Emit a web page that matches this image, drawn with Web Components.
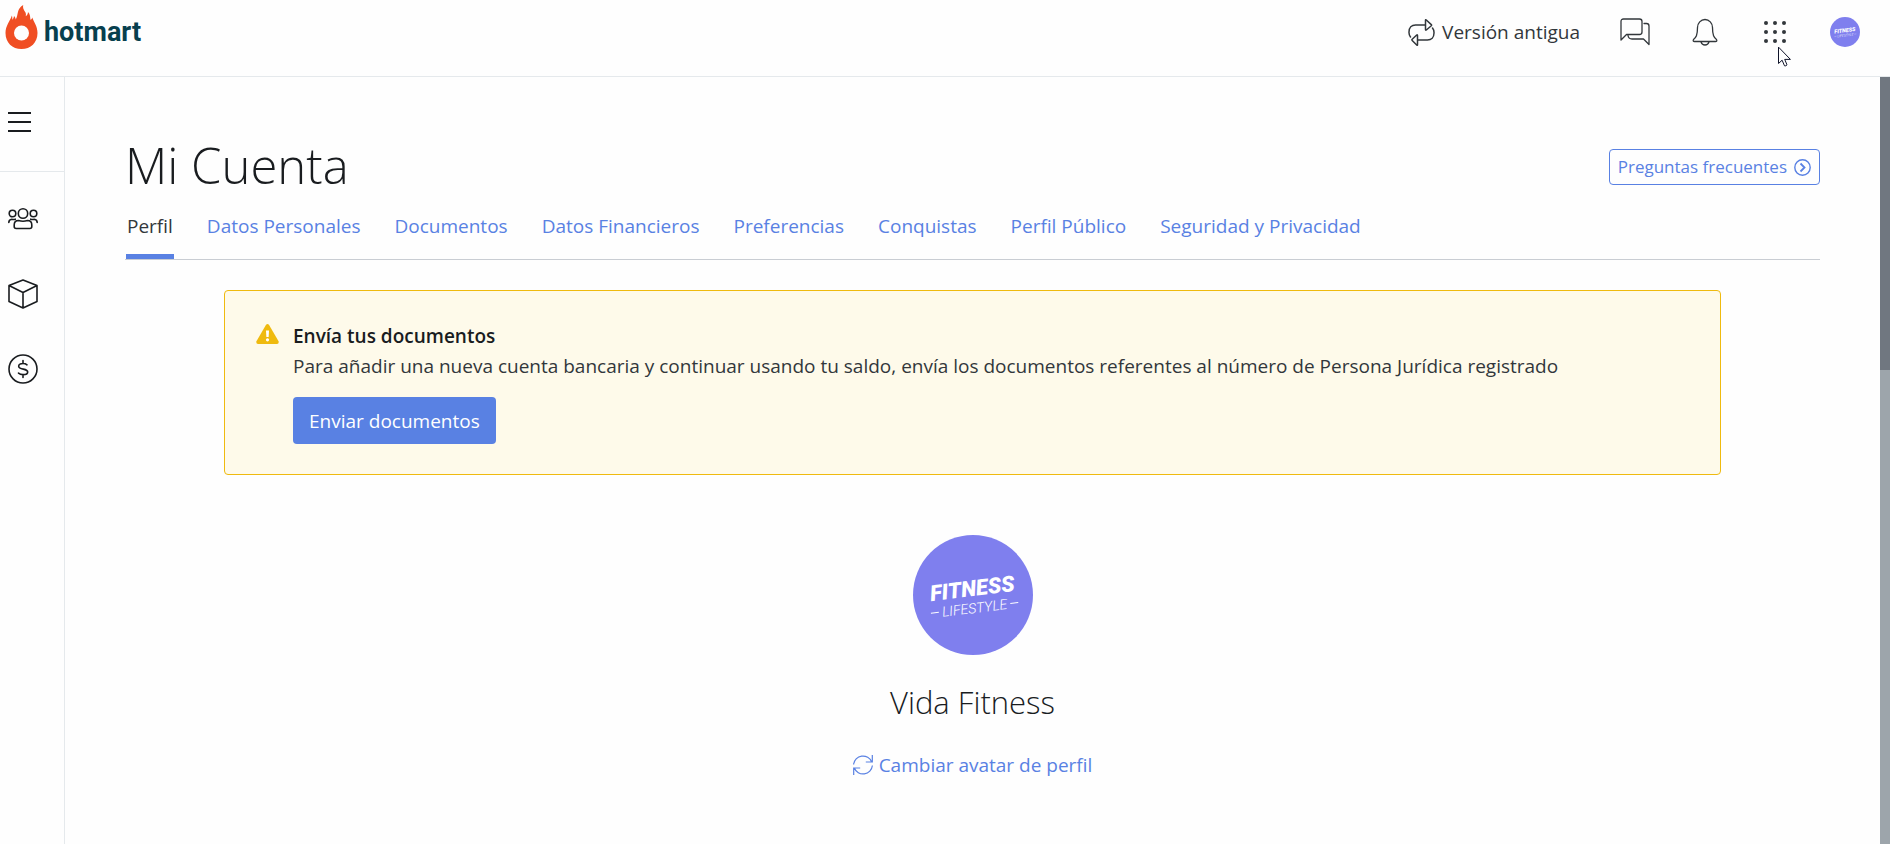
<!DOCTYPE html>
<html lang="es">
<head>
<meta charset="utf-8">
<meta name="viewport" content="width=device-width, initial-scale=1">
<title>Mi Cuenta</title>
<style>
  :root {
    --ink: #191c1f;
    --text: #32373b;
    --blue: #5981e3;
    --line: #e5e9ec;
    --rule: #c9cdd3;
    --amber: #efba0f;
    --cream: #fefaea;
    --violet: #7f7fee;
  }
  html, body { margin: 0; }
  body { background: #fefefe; color: var(--text); font: 19px/30px "Open Sans", "Noto Sans", sans-serif; }
</style>
</head>
<body>
<account-app></account-app>

<script>
const define = (name, html) => {
  const template = document.createElement('template');
  template.innerHTML = '<style>*{box-sizing:border-box}svg{display:block;flex:none}a{color:inherit;text-decoration:none}button{font:inherit;color:inherit;background:none;border:0;padding:0;cursor:pointer}</style>' + html;
  customElements.define(name, class extends HTMLElement {
    constructor() {
      super();
      this.attachShadow({ mode: 'open' }).append(template.content.cloneNode(true));
    }
  });
};

define('brand-logo', `
  <style>
    :host { display: block; }
    a { display: flex; align-items: flex-start; gap: 6px; color: #073f4e; font: 700 27px/44px Roboto, sans-serif; }
    span { padding-top: 5px; }
  </style>
  <a href="#">
    <svg width="33" height="44" viewBox="0 0 33 44" aria-hidden="true">
      <path fill="#f04e23" d="M18.200 0c-.8 4 1.600 5.800 2.300 7.600.6 1.500.5 2.500.2 3.700 1.500-.9 2.300-2.500 2.300-4.300 2.300 2.300 2.200 5 2.400 7.700 1-.3 1.600-1.200 1.900-2.300 1.600 4.800 5.200 8.400 5.200 15.500C32.500 37.500 25.700 44 16.500 44S.5 37.500.5 27.900c0-6.900 4.300-11.400 6.400-17.400.5 1.700.5 3 .4 4.200 1-.8 1.600-2.200 1.700-3.700 1 .8 1.600 2.100 1.700 3.500C13.500 10.500 11.500 3.500 18.200 0z"/>
      <circle cx="16.500" cy="28" r="7.500" fill="#fefefe"/>
    </svg>
    <span>hotmart</span>
  </a>`);

define('profile-avatar', `
  <style>
    :host { display: block; }
    svg { width: 100%; height: 100%; }
    text { fill: #fff; font-family: Roboto, sans-serif; text-anchor: middle; }
    .big { font-size: 22px; font-weight: 900; font-style: italic; }
    .small { font-size: 14px; font-weight: 300; font-style: italic; }
  </style>
  <svg viewBox="0 0 120 120" role="img" aria-label="Fitness Lifestyle">
    <circle cx="60" cy="60" r="60" fill="var(--violet)"/>
    <g transform="rotate(-7 60 60)">
      <text class="big" x="60" y="61">FITNESS</text>
      <text class="small" x="60" y="78">LIFESTYLE</text>
      <path d="M16 73h8M96 73h8" stroke="#fff" stroke-width="1"/>
    </g>
  </svg>`);

define('app-header', `
  <style>
    :host { display: flex; justify-content: space-between; align-items: flex-start; height: 77px; padding: 5px 30px 0 5px; border-bottom: 1px solid var(--line); }
    nav { display: flex; align-items: center; gap: 40px; height: 54px; }
    nav a { display: flex; align-items: center; gap: 7px; }
    .tool { display: grid; place-items: center; width: 30px; height: 30px; }
    svg { fill: none; stroke: var(--text); stroke-linejoin: round; stroke-linecap: round; }
    .apps { position: relative; }
    .cursor { position: absolute; left: 18px; top: 30px; }
    profile-avatar { width: 30px; height: 30px; }
  </style>
  <brand-logo></brand-logo>
  <nav aria-label="Herramientas">
    <a href="#">
      <svg width="27" height="27" viewBox="0 0 27 27" stroke-width="1.500" aria-hidden="true">
        <path d="M2.500 18A7.300 7.300 0 0 1 1 13C1 8.700 3.700 6 7.500 6H17M24.500 9a7.300 7.300 0 0 1 1.500 5c0 4.300-2.700 7-6.500 7H10M17.500 1.200q0-1 .8-.2l5 4.600q.6.600 0 1.200l-5 4.200q-.8.600-.8-.4zM9.500 25.800q0 1-.8.2l-4.500-4.600q-.6-.6 0-1.200l4.500-4.200q.8-.6.800.4z"/>
      </svg>
      Versión antigua
    </a>
    <button class="tool" aria-label="Mensajes">
      <svg width="30" height="28" viewBox="0 0 30 28" stroke-width="1.300">
        <path d="M1 22V3.500Q1 1 3.500 1h16Q22 1 22 3.500V14q0 2.500-2.500 2.500H6.500zM24 5.500h2.500Q29 5.500 29 8v18.500L23.500 21H12q-3.500 0-4-3.500"/>
      </svg>
    </button>
    <button class="tool" aria-label="Notificaciones">
      <svg width="26" height="28" viewBox="0 0 26 28" stroke-width="1.300">
        <path d="M5.500 9.500a7.500 8 0 0 1 15 0c0 8 1.500 10 4 12q1 2-1 2h-21q-2 0-1-2c2.500-2 4-4 4-12zM9 24q1 3 4 3t4-3"/>
      </svg>
    </button>
    <button class="tool apps" aria-label="Aplicaciones">
      <svg width="22" height="22" viewBox="0 0 22 22" style="fill:var(--text);stroke:none">
        <circle cx="2" cy="2" r="2"/><circle cx="11" cy="2" r="2"/><circle cx="20" cy="2" r="2"/>
        <circle cx="2" cy="11" r="2"/><circle cx="11" cy="11" r="2"/><circle cx="20" cy="11" r="2"/>
        <circle cx="2" cy="20" r="2"/><circle cx="11" cy="20" r="2"/><circle cx="20" cy="20" r="2"/>
      </svg>
      <svg class="cursor" width="13" height="20" viewBox="0 0 13 20" aria-hidden="true">
        <path d="M.5.500v16l3.600-3.300 2.400 5.600q1.500.5 2.500-1l-2.300-5.400h5.300z" fill="#fff" stroke="#10142a" stroke-width="1"/>
      </svg>
    </button>
    <a href="#" aria-label="Mi perfil"><profile-avatar></profile-avatar></a>
  </nav>`);

define('side-bar', `
  <style>
    :host { display: block; width: 65px; border-right: 1px solid var(--line); }
    svg { fill: none; stroke: var(--ink); stroke-width: 1.600; stroke-linejoin: round; stroke-linecap: round; }
    .menu { display: block; padding: 35px 8px 39px; width: 100%; border-bottom: 1px solid var(--line); }
    nav { display: grid; gap: 45px; padding: 32px 8px; }
  </style>
  <button class="menu" aria-label="Menú">
    <svg width="23" height="20" viewBox="0 0 23 20" style="stroke-width:2;stroke-linecap:butt"><path d="M0 1h23M0 10h23M0 19h23"/></svg>
  </button>
  <nav aria-label="Principal">
    <a href="#" aria-label="Afiliados"><svg width="30" height="30" viewBox="0 0 30 30">
      <circle cx="15" cy="9.500" r="4.700"/><circle cx="4.500" cy="9.500" r="3.300"/><circle cx="25.500" cy="9.500" r="3.300"/>
      <path d="M10.500 16.500q4.500 1.500 9 0 4.300 0 4.300 4.500v1.500q0 2-2 2H8.200q-2 0-2-2V21q0-4.500 4.300-4.500zM.8 18.500q0-3 3-3.300 2 .6 3.500 0M29.200 18.500q0-3-3-3.300-2 .6-3.500 0"/>
    </svg></a>
    <a href="#" aria-label="Productos"><svg width="30" height="30" viewBox="0 0 30 30">
      <path d="M15 1l14 5.500v16L15 29 1 22.500v-16zM1 6.500L15 13.500l14-7M15 13.500V29"/>
    </svg></a>
    <a href="#" aria-label="Ventas"><svg width="30" height="30" viewBox="0 0 30 30">
      <circle cx="15" cy="15" r="14"/>
      <path d="M15 6.500v3M15 20.500v3M19 10.800q-1.500-1.300-4-1.300c-3 0-4.300 1.200-4.300 2.700 0 4 9 1.800 9 5.700 0 1.700-1.700 2.700-4.700 2.700q-2.800 0-4.500-1.500"/>
    </svg></a>
  </nav>`);

define('account-tabs', `
  <style>
    :host { display: block; }
    nav { display: flex; flex-wrap: wrap; gap: 0 32px; border-bottom: 1px solid var(--rule); color: var(--blue); padding-left: 1px; }
    a { padding: 14px 1px 13px; border-bottom: 5px solid transparent; }
    a[aria-current] { color: var(--text); border-color: var(--blue); }
  </style>
  <nav aria-label="Secciones de la cuenta">
    <a href="#" aria-current="page">Perfil</a><a href="#">Datos Personales</a><a href="#">Documentos</a><a href="#">Datos Financieros</a><a href="#">Preferencias</a><a href="#">Conquistas</a><a href="#">Perfil Público</a><a href="#">Seguridad y Privacidad</a>
  </nav>`);

define('warning-alert', `
  <style>
    :host { display: flex; gap: 14px; padding: 30px 31px; background: var(--cream); border: 1px solid var(--amber); border-radius: 4px; color: var(--text); }
    svg { margin-top: 3px; }
    h2 { margin: 0; font-size: 19px; line-height: 30px; font-weight: 600; color: var(--ink); }
    p { margin: 0 0 16px; }
    button { height: 47px; padding: 0 16px; border-radius: 4px; background: var(--blue); color: #fff; }
  </style>
  <svg width="23" height="20" viewBox="0 0 23 20" aria-hidden="true">
    <path fill="var(--amber)" d="M9.900 1q1.600-1.900 3.200 0l9.600 16.500Q23 20 21 20H2Q0 20 .3 17.500z"/>
    <path fill="#fff" d="M10 6.500h3l-.4 6.500h-2.200z"/><circle cx="11.500" cy="15.800" r="1.600" fill="#fff"/>
  </svg>
  <div>
    <h2><slot name="title"></slot></h2>
    <p><slot></slot></p>
    <button type="button"><slot name="action"></slot></button>
  </div>`);

define('profile-card', `
  <style>
    :host { display: grid; justify-items: center; }
    profile-avatar { width: 120px; height: 120px; }
    h2 { margin: 27px 0 0; font-size: 31px; line-height: 40px; font-weight: 300; color: var(--ink); }
    button { display: flex; align-items: center; gap: 6px; margin-top: 28px; color: var(--blue); line-height: 30px; }
  </style>
  <profile-avatar></profile-avatar>
  <h2><slot></slot></h2>
  <button type="button">
    <svg width="20" height="20" viewBox="0 0 20 20" fill="none" stroke="currentColor" stroke-width="1.200" aria-hidden="true">
      <path d="M.6 9.500A9.400 9.400 0 0 1 18.700 7M19.400 10.500A9.400 9.400 0 0 1 1.300 13M19.300 0v7h-6.500M.7 20v-7h6.500"/>
    </svg>
    Cambiar avatar de perfil
  </button>`);

define('account-page', `
  <style>
    :host { display: block; padding: 60px 60px 68px; }
    header { display: flex; justify-content: space-between; align-items: center; }
    h1 { margin: 0; padding-bottom: 4px; font-size: 49px; line-height: 56px; font-weight: 300; color: var(--ink); }
    .faq { display: flex; align-items: center; gap: 7px; height: 36px; padding: 0 8px; border: 1px solid var(--blue); border-radius: 4px; color: var(--blue); font-size: 17px; }
    warning-alert { margin: 30px 99px 60px; }
  </style>
  <header>
    <h1>Mi Cuenta</h1>
    <a class="faq" href="#">Preguntas frecuentes
      <svg width="17" height="17" viewBox="0 0 17 17" fill="none" stroke="currentColor" stroke-width="1.400" aria-hidden="true">
        <circle cx="8.500" cy="8.500" r="7.700"/><path d="M6.500 4.500l4 4-4 4" stroke-width="1.800"/>
      </svg>
    </a>
  </header>
  <account-tabs></account-tabs>
  <warning-alert>
    <span slot="title">Envía tus documentos</span>
    Para añadir una nueva cuenta bancaria y continuar usando tu saldo, envía los documentos referentes al número de Persona Jurídica registrado
    <span slot="action">Enviar documentos</span>
  </warning-alert>
  <profile-card>Vida Fitness</profile-card>`);

define('scroll-track', `
  <style>
    :host { display: block; width: 10px; background: #9da5ab; }
    div { height: 38%; background: #707780; }
  </style>
  <div></div>`);

define('account-app', `
  <style>
    :host { display: flex; flex-direction: column; min-height: 100vh; }
    .body { display: grid; grid-template-columns: auto minmax(0, 1fr) auto; flex: 1; }
  </style>
  <app-header></app-header>
  <div class="body">
    <side-bar></side-bar>
    <main><account-page></account-page></main>
    <scroll-track></scroll-track>
  </div>`);
</script>
</body>
</html>
